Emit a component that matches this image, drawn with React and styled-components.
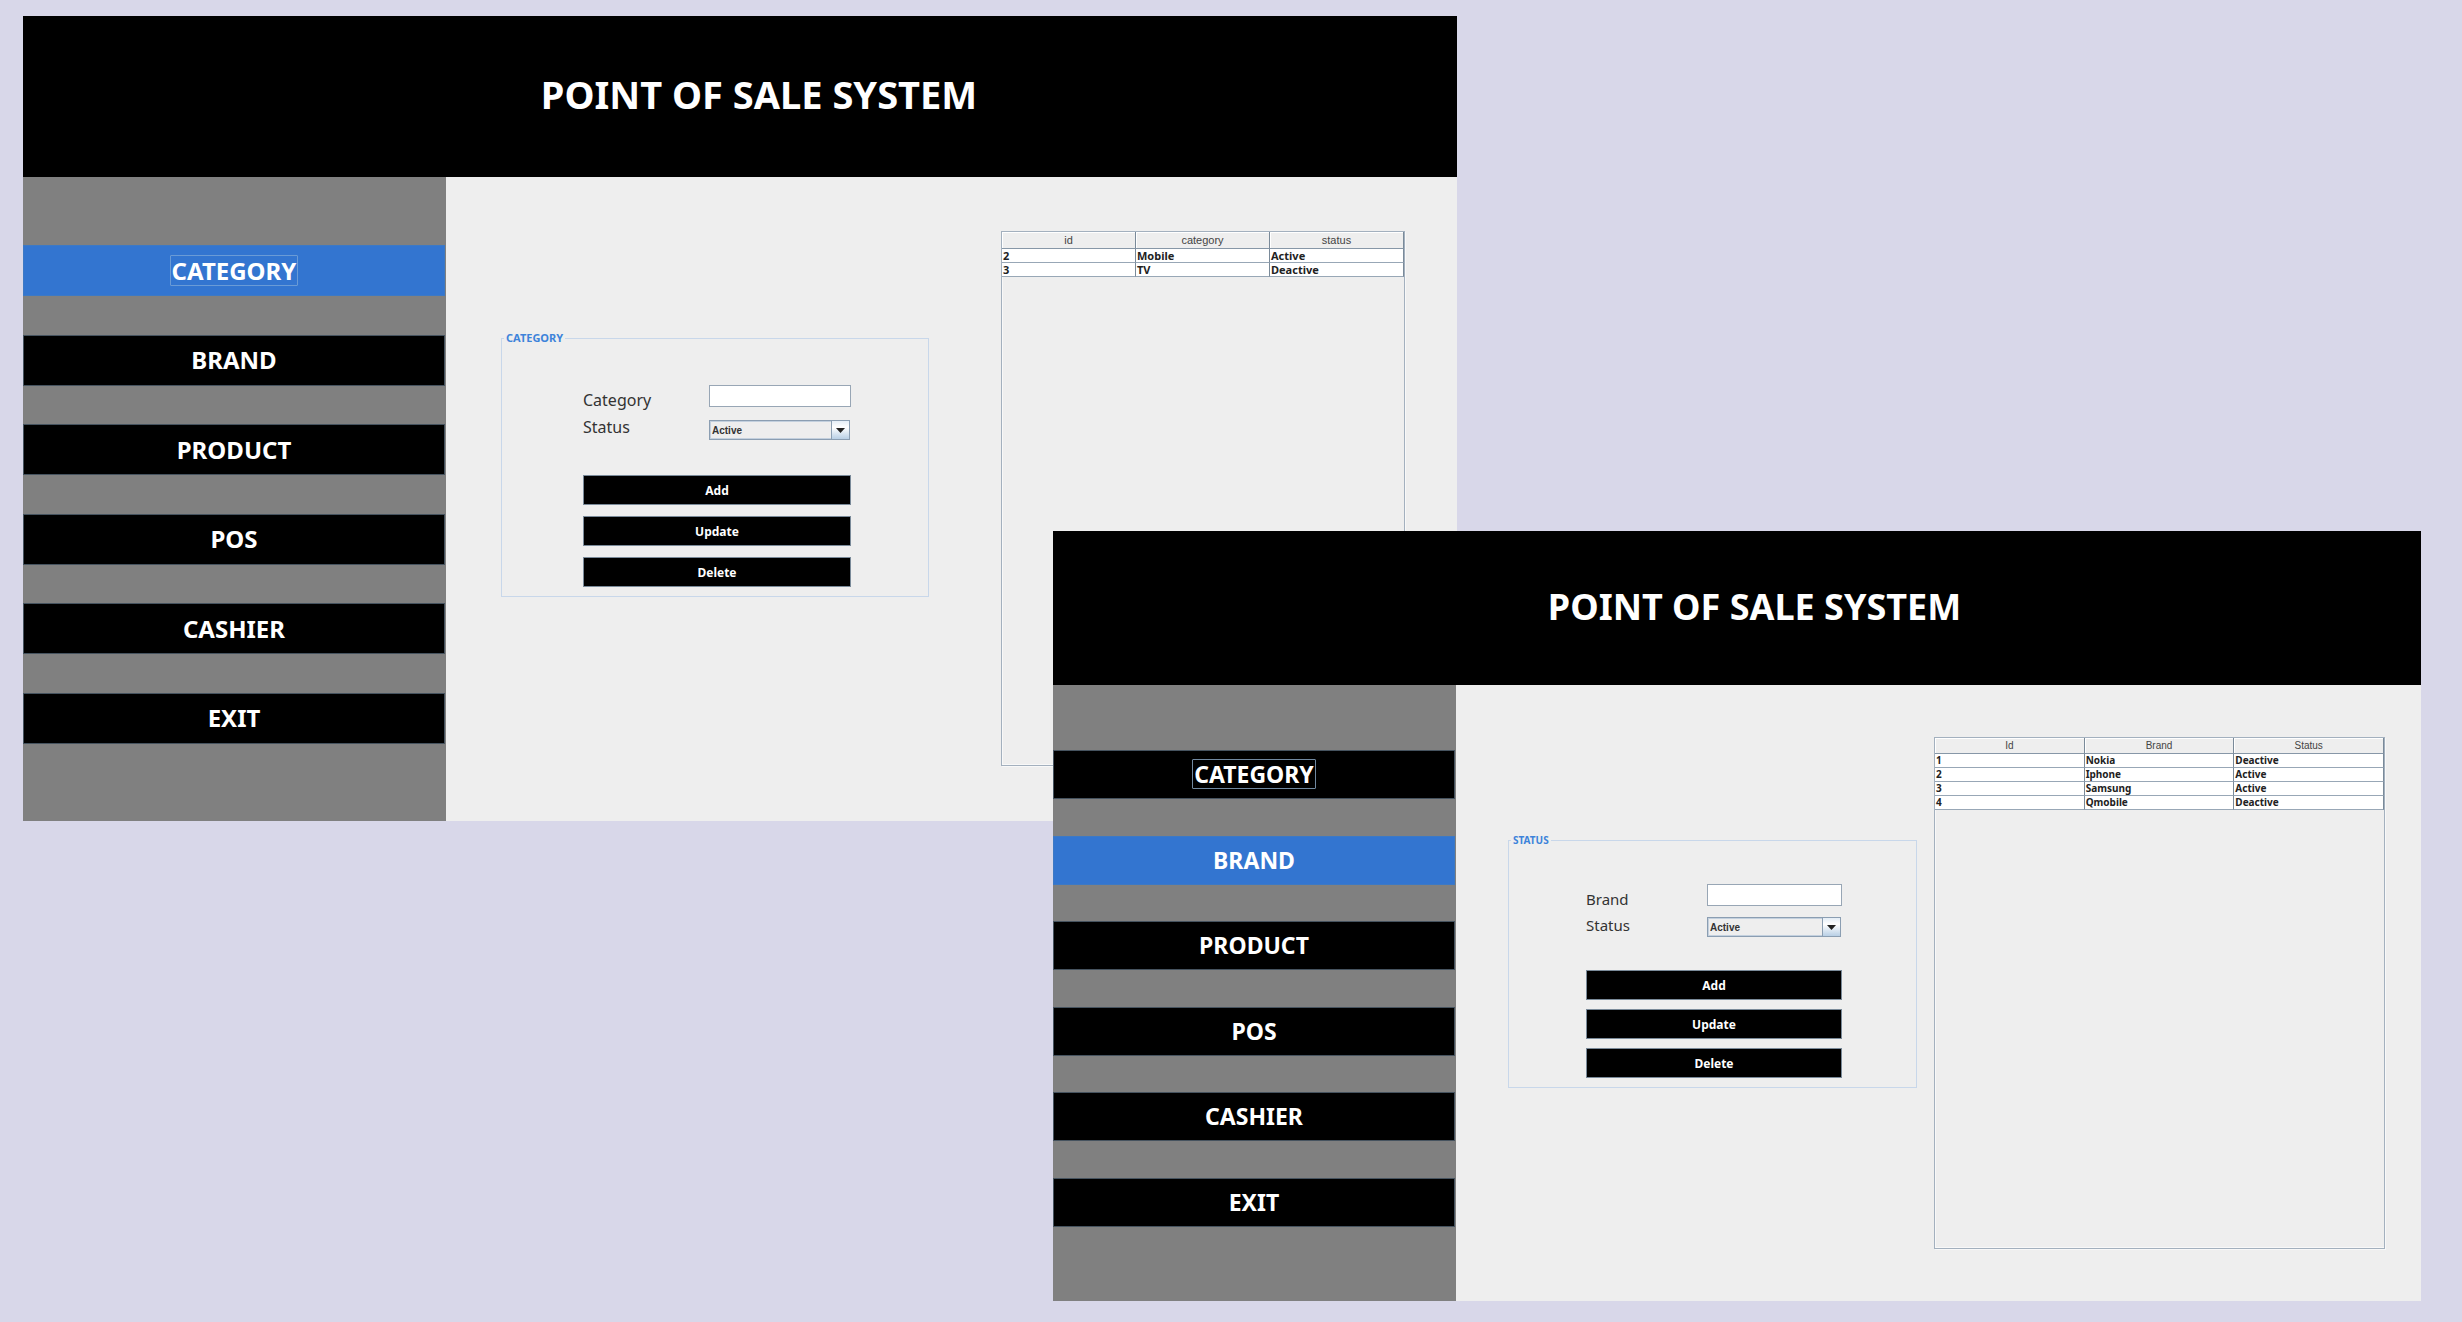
import React, { useId, useState } from "react";
import styled, { createGlobalStyle, css, ThemeProvider } from "styled-components";


const GlobalStyle = createGlobalStyle`
	* {
		box-sizing: border-box;
	}

	body {
		margin: 0;
		background-color: #d8d7e9;
		font-family: "Noto Sans", "DejaVu Sans", sans-serif;
	}

	button, input, select {
		font-family: inherit;
		margin: 0;
	}
`

// sizes of the two windows, the back one is slightly larger
const large = {
	title: 38,
	menu: 24,
	label: 16,
	labelLine: 27,
	button: 12,
	cell: 11,
	head: 11,
	headHeight: 17,
	legend: 11,
	headerHeight: 161,
	headerPadding: "0 0 6px 38px",
	sidebar: 423,
	sidebarPadding: "68px 1px 77px 0",
	menuHeight: 51,
	menuLine: 29,
	mainPadding: "54px 52px 55px 55px",
	mainColumns: "minmax(0, 428fr) minmax(0, 404fr)",
	mainGap: 72,
	formMargin: 99,
	formPadding: "39px 77px 9px 81px",
	control: 142,
	controlGap: 13,
	actionsMargin: 34,
	actionGap: 11,
	pane: 535,
}

const small = {
	title: 36,
	menu: 23,
	label: 15,
	labelLine: 26,
	button: 12,
	cell: 10,
	head: 10,
	headHeight: 16,
	legend: 10,
	headerHeight: 154,
	headerPadding: "0 0 4px 35px",
	sidebar: 403,
	sidebarPadding: "65px 1px 74px 0",
	menuHeight: 49,
	menuLine: 28,
	mainPadding: "52px 36px 52px 52px",
	mainColumns: "minmax(0, 409fr) minmax(0, 451fr)",
	mainGap: 17,
	formMargin: 95,
	formPadding: "36px 74px 9px 77px",
	control: 135,
	controlGap: 11,
	actionsMargin: 32,
	actionGap: 9,
	pane: 512,
}

const Desktop = styled.div`
	position: relative;
	min-height: 100vh;
	overflow: hidden;
`

const Frame = styled.section`
	position: absolute;
	background-color: #eeeeee;
`

const BackFrame = styled(Frame)`
	top: 16px;
	left: 23px;
	right: 1005px;
`

const FrontFrame = styled(Frame)`
	top: 531px;
	left: 1053px;
	right: 41px;
`

const Header = styled.header`
	display: flex;
	align-items: center;
	justify-content: center;
	min-height: ${({theme}) => theme.headerHeight}px;
	padding: ${({theme}) => theme.headerPadding};
	background-color: black;
`

const Title = styled.h1`
	margin: 0;
	color: white;
	font-size: ${({theme}) => theme.title}px;
	font-weight: bold;
	white-space: nowrap;
`

const Body = styled.div`
	display: grid;
	grid-template-columns: ${({theme}) => theme.sidebar}px minmax(0, 1fr);
`

const Sidebar = styled.nav`
	display: flex;
	flex-direction: column;
	justify-content: space-between;
	padding: ${({theme}) => theme.sidebarPadding};
	background-color: #808080;
`

const MenuButton = styled.button`
	display: flex;
	align-items: center;
	justify-content: center;
	height: ${({theme}) => theme.menuHeight}px;
	padding: 0 0 1px;
	border: 1px solid #46535f;
	background-color: black;
	color: white;
	font-size: ${({theme}) => theme.menu}px;
	font-weight: bold;

	${({$active}) => $active && css`
		border-color: #3d79c4;
		background-color: #3375d0;
	`}
`

const MenuText = styled.span`
	padding: 0 1px;
	border: 1px solid transparent;
	border-radius: 1px;
	line-height: ${({theme}) => theme.menuLine}px;

	${({$focused, $active}) => $focused && css`
		border-color: ${$active ? "#6a9bd6" : "#7088a0"};
	`}
`

const Main = styled.main`
	display: grid;
	grid-template-columns: ${({theme}) => theme.mainColumns};
	align-items: start;
	column-gap: ${({theme}) => theme.mainGap}px;
	padding: ${({theme}) => theme.mainPadding};
`

const Form = styled.form`
	margin-top: ${({theme}) => theme.formMargin}px;
`

const Group = styled.fieldset`
	min-width: 0;
	margin: 0;
	padding: ${({theme}) => theme.formPadding};
	border: 1px solid #c8d7ea;
`

const GroupTitle = styled.legend`
	margin-left: calc(2px - ${({theme}) => theme.formPadding.split(" ")[3]});
	padding: 0 2px;
	color: #3d83da;
	font-size: ${({theme}) => theme.legend}px;
	font-weight: bold;
	line-height: 16px;
`

const Fields = styled.div`
	display: grid;
	grid-template-columns: minmax(0, 1fr) ${({theme}) => theme.control}px;
`

const Labels = styled.div`
	display: flex;
	flex-direction: column;
	padding-top: 2px;
`

const Label = styled.label`
	color: #333333;
	font-size: ${({theme}) => theme.label}px;
	line-height: ${({theme}) => theme.labelLine}px;
`

const Controls = styled.div`
	display: flex;
	flex-direction: column;
	gap: ${({theme}) => theme.controlGap}px;
`

const TextBox = styled.input`
	width: 100%;
	height: 22px;
	padding: 0 3px;
	border: 1px solid #98a6b5;
	border-radius: 0;
	background-color: white;
	font-size: 11px;
	outline: none;
`

const SelectBox = styled.div`
	display: grid;
	height: 20px;
	padding-right: 1px;
`

const Select = styled.select`
	grid-area: 1 / 1;
	appearance: none;
	width: 100%;
	height: 20px;
	padding: 0 20px 0 2px;
	border: 1px solid #8b9eb2;
	border-radius: 0;
	box-shadow: inset 0 0 0 1px #c3d0de;
	background-color: #eeeeee;
	color: #333333;
	font-family: "Liberation Sans", Arial, sans-serif;
	font-size: 10px;
	font-weight: bold;
	outline: none;
`

const Arrow = styled.span`
	grid-area: 1 / 1;
	justify-self: end;
	display: flex;
	align-items: center;
	justify-content: center;
	width: 19px;
	height: 20px;
	border: 1px solid #8b9eb2;
	background: linear-gradient(to bottom, #e4edf6, white 35%, #b8cfe5);
	pointer-events: none;
`

const Actions = styled.div`
	display: flex;
	flex-direction: column;
	gap: ${({theme}) => theme.actionGap}px;
	margin-top: ${({theme}) => theme.actionsMargin}px;
`

const ActionButton = styled.button`
	height: 30px;
	padding: 0;
	border: 1px solid #7a8a99;
	background-color: black;
	color: white;
	font-size: ${({theme}) => theme.button}px;
	font-weight: bold;
`

const Pane = styled.div`
	min-height: ${({theme}) => theme.pane}px;
	border: 1px solid #a3b0be;
	box-shadow: 1px 1px 0 #f8f8f8, inset 1px -1px 0 #f8f8f8;
`

const Table = styled.table`
	width: 100%;
	border-collapse: separate;
	border-spacing: 0;
	table-layout: fixed;
	color: #222222;
`

const HeadCell = styled.th`
	height: ${({theme}) => theme.headHeight}px;
	padding: 0;
	border-right: 1px solid #7a8a99;
	border-bottom: 1px solid #8797a7;
	box-shadow: inset 1px 1px 0 white;
	color: #444444;
	font-family: "Liberation Sans", Arial, sans-serif;
	font-size: ${({theme}) => theme.head}px;
	font-weight: normal;
	line-height: 15px;
`

const Cell = styled.td`
	height: 14px;
	padding: 0 1px;
	border-right: 1px solid #7a8a99;
	border-bottom: 1px solid #98a7b6;
	background-color: white;
	font-size: ${({theme}) => theme.cell}px;
	font-weight: bold;
	line-height: 13px;
`

const menuItems = ["CATEGORY", "BRAND", "PRODUCT", "POS", "CASHIER", "EXIT"]

const categories = [
	["2", "Mobile", "Active"],
	["3", "TV", "Deactive"],
]

const brands = [
	["1", "Nokia", "Deactive"],
	["2", "Iphone", "Active"],
	["3", "Samsung", "Active"],
	["4", "Qmobile", "Deactive"],
]

const Menu = ({active}) => (
	<Sidebar>
		{menuItems.map((item) => (
			<MenuButton key={item} type="button" $active={item === active}>
				<MenuText $focused={item === "CATEGORY"} $active={item === active}>{item}</MenuText>
			</MenuButton>
		))}
	</Sidebar>
	)

const EditForm = ({legend, label}) => {
	const id = useId()
	const [name, setName] = useState("")
	const [status, setStatus] = useState("Active")

	return (
		<Form onSubmit={(e) => e.preventDefault()}>
			<Group>
				<GroupTitle>{legend}</GroupTitle>
				<Fields>
					<Labels>
						<Label htmlFor={`${id}-name`}>{label}</Label>
						<Label htmlFor={`${id}-status`}>Status</Label>
					</Labels>
					<Controls>
						<TextBox id={`${id}-name`} value={name} onChange={(e) => setName(e.target.value)} />
						<SelectBox>
							<Select id={`${id}-status`} value={status} onChange={(e) => setStatus(e.target.value)}>
								<option>Active</option>
								<option>Deactive</option>
							</Select>
							<Arrow>
								<svg width="9" height="5" viewBox="0 0 9 5" aria-hidden="true">
									<path d="M0 0H9L4.5 5Z" fill="#222222" />
								</svg>
							</Arrow>
						</SelectBox>
					</Controls>
				</Fields>
				<Actions>
					<ActionButton type="submit">Add</ActionButton>
					<ActionButton type="button">Update</ActionButton>
					<ActionButton type="button">Delete</ActionButton>
				</Actions>
			</Group>
		</Form>
	)
}

const DataTable = ({columns, rows}) => (
	<Pane>
		<Table>
			<thead>
				<tr>
					{columns.map((column) => <HeadCell key={column} scope="col">{column}</HeadCell>)}
				</tr>
			</thead>
			<tbody>
				{rows.map((row) => (
					<tr key={row[0]}>
						{row.map((value, index) => <Cell key={index}>{value}</Cell>)}
					</tr>
				))}
			</tbody>
		</Table>
	</Pane>
	)

const PosWindow = ({as: Wrapper, theme, active, legend, label, columns, rows}) => (
	<ThemeProvider theme={theme}>
		<Wrapper>
			<Header>
				<Title>POINT OF SALE SYSTEM</Title>
			</Header>
			<Body>
				<Menu active={active} />
				<Main>
					<EditForm legend={legend} label={label} />
					<DataTable columns={columns} rows={rows} />
				</Main>
			</Body>
		</Wrapper>
	</ThemeProvider>
	)

const App = () => (
	<Desktop>
		<GlobalStyle />
		<PosWindow
			as={BackFrame}
			theme={large}
			active="CATEGORY"
			legend="CATEGORY"
			label="Category"
			columns={["id", "category", "status"]}
			rows={categories}
		/>
		<PosWindow
			as={FrontFrame}
			theme={small}
			active="BRAND"
			legend="STATUS"
			label="Brand"
			columns={["Id", "Brand", "Status"]}
			rows={brands}
		/>
	</Desktop>
	)

export default App;
